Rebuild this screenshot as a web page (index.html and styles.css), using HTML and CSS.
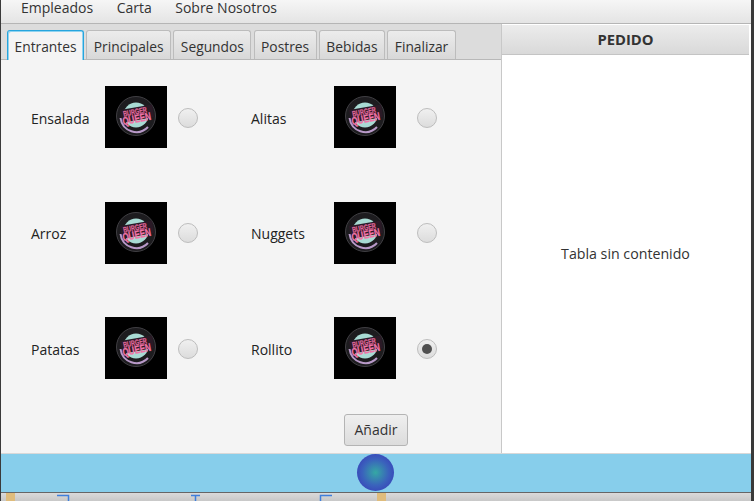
FILE: index.html
```html
<!DOCTYPE html>
<html lang="es">
<head>
    <meta charset="UTF-8">
    <meta name="viewport" content="width=device-width, initial-scale=1.0">
    <title>Burger Queen</title>
    <link rel="stylesheet" href="styles.css">
</head>
<body>
    <div class="window">
        <nav class="menu-bar">
            <span class="menu-item">Empleados</span>
            <span class="menu-item">Carta</span>
            <span class="menu-item">Sobre Nosotros</span>
        </nav>

        <div class="main">
            <section class="tab-pane">
                <div class="tab-header">
                    <div class="tab active">Entrantes</div>
                    <div class="tab">Principales</div>
                    <div class="tab">Segundos</div>
                    <div class="tab">Postres</div>
                    <div class="tab">Bebidas</div>
                    <div class="tab">Finalizar</div>
                </div>
                <div class="tab-content">
                    <div class="products">
                        <div class="product">
                            <span class="product-name">Ensalada</span>
                            <svg class="product-img" viewBox="0 0 62 62">
                                <g id="logo">
                                    <rect width="62" height="62" fill="#000"/>
                                    <circle cx="31" cy="30" r="19.5" fill="#1d1c1f" stroke="#403f43" stroke-width="1"/>
                                    <circle cx="31" cy="29" r="12.5" fill="#a8dbd4"/>
                                    <path d="M15 24 L47 18.500 L49 31 L17 37 Z" fill="#2a1a26"/>
                                    <path d="M15.500 32 A16 16 0 0 0 43 41" fill="none" stroke="#b99ac9" stroke-width="2"/>
                                    <text class="logo-small" x="30" y="28.500" text-anchor="middle" textLength="24" lengthAdjust="spacingAndGlyphs" transform="rotate(-11 30 26)">BURGER</text>
                                    <text class="logo-big" x="31.500" y="36.500" text-anchor="middle" textLength="29" lengthAdjust="spacingAndGlyphs" transform="rotate(-11 31.500 32)">QUEEN</text>
                                </g>
                            </svg>
                            <span class="radio"></span>
                        </div>
                        <div class="product second">
                            <span class="product-name">Alitas</span>
                            <svg class="product-img" viewBox="0 0 62 62"><use href="#logo"/></svg>
                            <span class="radio"></span>
                        </div>
                        <div class="product">
                            <span class="product-name">Arroz</span>
                            <svg class="product-img" viewBox="0 0 62 62"><use href="#logo"/></svg>
                            <span class="radio"></span>
                        </div>
                        <div class="product second">
                            <span class="product-name">Nuggets</span>
                            <svg class="product-img" viewBox="0 0 62 62"><use href="#logo"/></svg>
                            <span class="radio"></span>
                        </div>
                        <div class="product">
                            <span class="product-name">Patatas</span>
                            <svg class="product-img" viewBox="0 0 62 62"><use href="#logo"/></svg>
                            <span class="radio"></span>
                        </div>
                        <div class="product second">
                            <span class="product-name">Rollito</span>
                            <svg class="product-img" viewBox="0 0 62 62"><use href="#logo"/></svg>
                            <span class="radio checked"></span>
                        </div>
                    </div>
                    <button type="button" class="add-button">Añadir</button>
                </div>
            </section>

            <aside class="order">
                <div class="order-header">PEDIDO</div>
                <div class="order-body">Tabla sin contenido</div>
            </aside>
        </div>

        <footer class="footer">
            <div class="footer-ball"></div>
        </footer>
        <svg class="behind" width="750" height="8" viewBox="0 0 750 8" aria-hidden="true">
            <rect x="5" width="9" height="8" fill="#dfbc7c"/>
            <rect x="376" width="9" height="8" fill="#dfbc7c"/>
            <path d="M56 2.500 H67.500 V8 M190 2.500 H199 M194.500 2.500 V8 M331 2.500 H319.500 V8" fill="none" stroke="#3f7fdc" stroke-width="1.500"/>
        </svg>
    </div>
</body>
</html>
```

FILE: styles.css
```css
* {
    box-sizing: border-box;
}
html, body {
    height: 100%;
}
body {
    margin: 0;
    overflow: hidden;
    background-color: #3a3a3a;
    font-family: "Open Sans", "Noto Sans", sans-serif;
    font-size: 14px;
    color: #333;
}
.window {
    display: flex;
    flex-direction: column;
    height: 501px;
    margin: 0 3px 0 1px;
}
.menu-bar {
    display: flex;
    height: 24px;
    padding-left: 20px;
    gap: 23.5px;
    background: linear-gradient(#f6f6f6, #e4e4e4);
    border-bottom: 1px solid #b5b5b5;
    line-height: 15px;
}
.main {
    display: flex;
    height: 429px;
    background-color: #f4f4f4;
}
.tab-pane {
    width: 500px;
    display: flex;
    flex-direction: column;
}
.tab-header {
    display: flex;
    height: 36px;
    padding: 6px 0 0 6px;
    gap: 2.2px;
    background-color: #dcdcdc;
    border-bottom: 1px solid #b8b8b8;
    font-size: 13.8px;
}
.tab {
    height: 29px;
    padding: 6px 6.5px 0;
    line-height: 19px;
    border: 1px solid #bcbcbc;
    border-bottom: none;
    border-radius: 3px 3px 0 0;
    background: linear-gradient(#ececec, #d8d8d8);
}
.tab.active {
    height: 30px;
    background: #f4f4f4;
    border: 1px solid #27a5dd;
    border-bottom: none;
    box-shadow: inset 1px 1px 0 #8fd3f0, inset -1px 0 0 #8fd3f0;
}
.tab-content {
    position: relative;
    flex: 1;
}
.products {
    display: grid;
    grid-template-columns: 220px 220px;
    grid-auto-rows: 62px;
    row-gap: 53.5px;
    padding: 26px 0 0 30px;
}
.product {
    display: flex;
    align-items: center;
}
.product-name {
    width: 74px;
    padding-top: 2px;
    color: #222;
}
.product.second .product-name {
    width: 83px;
}
.product-img {
    width: 62px;
    height: 62px;
    margin-right: 11px;
}
.product.second .product-img {
    margin-right: 21px;
}
.radio {
    width: 20px;
    height: 20px;
    margin-top: 1px;
    border-radius: 50%;
    border: 1px solid #bdbdbd;
    background: linear-gradient(#f0f0f0, #dcdcdc);
    display: flex;
    align-items: center;
    justify-content: center;
}
.radio.checked::after {
    content: "";
    width: 10px;
    height: 10px;
    border-radius: 50%;
    background-color: #505050;
}
.logo-small {
    font-family: "Liberation Sans", sans-serif;
    font-weight: bold;
    font-size: 8px;
    fill: #e0689b;
    stroke: #e0689b;
    stroke-width: 0.2px;
}
.logo-big {
    font-family: "Liberation Sans", sans-serif;
    font-weight: bold;
    font-size: 11px;
    fill: #ef74a8;
    stroke: #ef74a8;
    stroke-width: 0.3px;
}
.add-button {
    position: absolute;
    left: 343px;
    top: 354px;
    width: 64px;
    height: 32px;
    padding: 0 0 2px;
    font: inherit;
    color: #333;
    border: 1px solid #b4b4b4;
    border-radius: 3px;
    background: linear-gradient(#efefef, #dcdcdc);
}
.order {
    width: 250px;
    display: flex;
    flex-direction: column;
    background-color: #fff;
    border-left: 1px solid #c8c8c8;
}
.order-header {
    height: 30px;
    margin: 1px 2px 0 0;
    text-align: center;
    font-size: 14.8px;
    font-weight: bold;
    line-height: 28px;
    background: linear-gradient(#ececec, #d9d9d9);
    border-bottom: 1px solid #c4c4c4;
}
.order-body {
    flex: 1;
    display: flex;
    align-items: center;
    justify-content: center;
    font-size: 14.2px;
    padding: 0 2px 2px 0;
}
.footer {
    display: flex;
    justify-content: center;
    height: 39px;
    background-color: #87ceeb;
    border-top: 1px solid #d8d8d8;
}
.footer-ball {
    width: 37px;
    height: 37px;
    margin-left: -1px;
    border-radius: 50%;
    background: radial-gradient(circle, #35a8a4 0%, #3a62bc 50%, #382fb8 100%);
}
.behind {
    display: block;
    flex: none;
    height: 9px;
    background: linear-gradient(#dadada, #c8c8c8);
    border-top: 1px solid #666;
}
```
